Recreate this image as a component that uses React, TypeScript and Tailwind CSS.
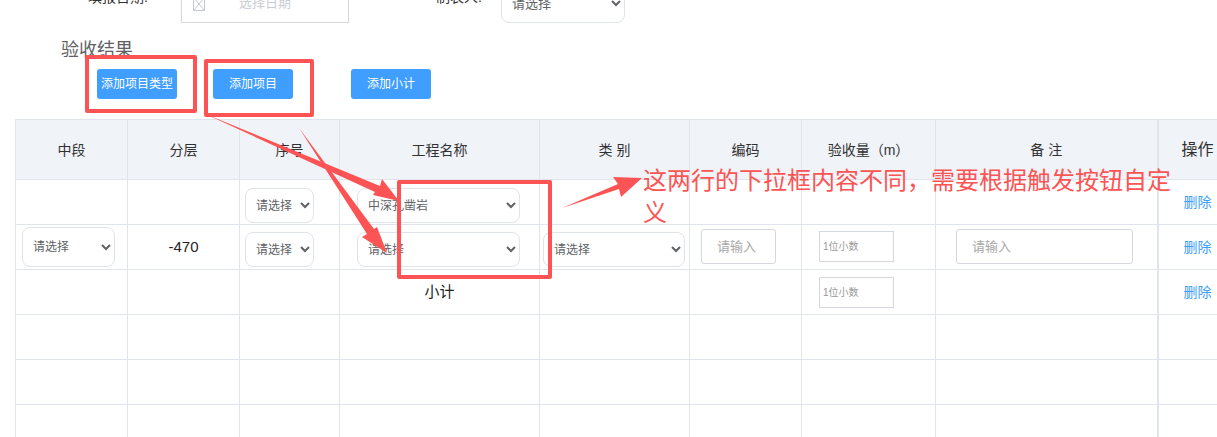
const cols = [112, 112, 100, 200, 150, 112, 134, 222, 80];
const headers = ["中段", "分层", "序号", "工程名称", "类 别", "编码", "验收量（m）", "备 注", "操作"];
const font = "[font-family:'Liberation_Sans','Noto_Sans_CJK_SC',sans-serif]";

function Sel({ label, className }: { label: string; className: string }) {
  return (
    <select
      defaultValue={label}
      className={`border border-[#dfe3ea] rounded-[8px] bg-white pl-[6px] text-[12px] text-[#606266] ${className}`}
    >
      <option>{label}</option>
    </select>
  );
}

function Cell({ children, className = "" }: { children?: React.ReactNode; className?: string }) {
  return <div className={`h-[44px] flex ${className}`}>{children}</div>;
}

function TextInput({ className }: { className: string }) {
  return (
    <div className={`flex items-center pl-[15px] border border-[#d5d8de] rounded-[3px] text-[13px] text-[#a8a8a8] ${className}`}>
      请输入
    </div>
  );
}

function Decimal() {
  return (
    <div className="w-[75px] h-[31px] flex items-center pl-[3px] border border-[#d5d8de] text-[10px] text-[#999]">
      1位小数
    </div>
  );
}

function Del() {
  return (
    <Cell className="items-center pl-[25px]">
      <a className="text-[14px] text-[#409eff]">删除</a>
    </Cell>
  );
}

export default function App() {
  const rows: React.ReactNode[][] = [
    [
      <Cell />,
      <Cell />,
      <Cell className="pt-[8px] pl-[5px]"><Sel label="请选择" className="w-[69px] h-[35px]" /></Cell>,
      <Cell className="pt-[8px] pl-[17px]"><Sel label="中深孔凿岩" className="w-[163px] h-[35px]" /></Cell>,
      <Cell />,
      <Cell />,
      <Cell />,
      <Cell />,
      <Del />,
    ],
    [
      <Cell className="pt-[2px] pl-[6px]"><Sel label="请选择" className="w-[93px] h-[40px]" /></Cell>,
      <Cell className="items-center justify-center pt-[1px] text-[15px] text-[#222]">-470</Cell>,
      <Cell className="pt-[7px] pl-[5px]"><Sel label="请选择" className="w-[69px] h-[35px]" /></Cell>,
      <Cell className="pt-[7px] pl-[17px]"><Sel label="请选择" className="w-[163px] h-[35px]" /></Cell>,
      <Cell className="pt-[7px] pl-[3px]"><Sel label="请选择" className="w-[142px] h-[35px]" /></Cell>,
      <Cell className="pt-[4px] pl-[11px]"><TextInput className="w-[75px] h-[35px]" /></Cell>,
      <Cell className="pt-[6px] pl-[17px]"><Decimal /></Cell>,
      <Cell className="pt-[4px] pl-[20px]"><TextInput className="w-[177px] h-[35px]" /></Cell>,
      <Del />,
    ],
    [
      <Cell />,
      <Cell />,
      <Cell />,
      <Cell className="items-center justify-center text-[15px] text-[#222]">小计</Cell>,
      <Cell />,
      <Cell />,
      <Cell className="pt-[7px] pl-[17px]"><Decimal /></Cell>,
      <Cell />,
      <Del />,
    ],
    Array.from({ length: 9 }, () => <Cell />),
    Array.from({ length: 9 }, () => <Cell />),
    Array.from({ length: 9 }, () => <Cell />),
  ];

  return (
    <div className={`relative w-[1217px] h-[437px] overflow-hidden bg-white ${font}`}>
      {/* form row, cut off by the top of the shot */}
      <div className="h-[23px] overflow-hidden flex items-end text-[14px] text-[#606266]">
        <div className="w-[181px] pl-[88px] mb-[15px] text-[#333] whitespace-nowrap">填报日期:</div>
        <div className="w-[168px] h-[40px] border border-[#d5d8de] flex items-end pb-[10px] pl-[11px] text-[13px] text-[#c8ccd3]">
          <svg width="12" height="14" viewBox="0 0 12 14" className="mb-[1px]" fill="none" stroke="#c4c8ce">
            <path d="M.5.5h11v13H.5zM.5.5l11 13M11.5.5l-11 13" />
          </svg>
          <span className="ml-[34px]">选择日期</span>
        </div>
        <div className="w-[152px] pl-[87px] mb-[15px] text-[#333] whitespace-nowrap">制表人:</div>
        <select defaultValue="请选择" className="w-[124px] h-[40px] border border-[#dfe3ea] rounded-[8px] bg-white pl-[6px] text-[13px] text-[#606266]">
          <option>请选择</option>
        </select>
      </div>

      <div className="h-[46px] pl-[61px] pt-[15px] text-[18px] leading-[24px] text-[#606266]">验收结果</div>

      <div className="h-[50px] flex pl-[97px] gap-[36px] text-[12px] text-white">
        <button className="w-[80px] h-[30px] bg-[#409eff] rounded-[3px] whitespace-nowrap">添加项目类型</button>
        <button className="w-[80px] h-[30px] bg-[#409eff] rounded-[3px]">添加项目</button>
        <button className="w-[80px] h-[30px] ml-[22px] bg-[#409eff] rounded-[3px]">添加小计</button>
      </div>

      <table className="ml-[15px] table-fixed border-collapse w-[1222px]">
        <colgroup>
          {cols.map((w, i) => (
            <col key={i} style={{ width: w }} />
          ))}
        </colgroup>
        <thead>
          <tr className="h-[60px] bg-[#f0f3f8]">
            {headers.map((h, i) => (
              <th
                key={i}
                className={`border border-[#dfe4ed] p-0 pt-[1px] text-center font-normal text-[14px] text-[#303133] ${i === 8 ? "border-l-2 text-[16px] text-left pl-[23px]" : ""}`}
              >
                {h}
              </th>
            ))}
          </tr>
        </thead>
        <tbody>
          {rows.map((row, r) => (
            <tr key={r}>
              {row.map((c, i) => (
                <td key={i} className={`border border-[#dfe4ed] p-0 ${i === 8 ? "border-l-2" : ""}`}>
                  {c}
                </td>
              ))}
            </tr>
          ))}
        </tbody>
      </table>

      {/* red markup drawn on top of the screenshot */}
      <div className="absolute left-[85px] top-[55px] w-[112px] h-[58px] border-[4px] border-[#fc5454] rounded-[2px]" />
      <div className="absolute left-[204px] top-[59px] w-[110px] h-[58px] border-[4px] border-[#fc5454] rounded-[2px]" />
      <div className="absolute left-[397px] top-[180px] w-[155px] h-[99px] border-[4px] border-[#fc5454] rounded-[2px]" />

      <svg className="absolute inset-0" width="1217" height="437" fill="#fc5454">
        <polygon points="203,113 380,186 382,179 399,201 373,195 375,192" />
        <polygon points="299,128 374,229 377,227 387,253 362,237 367,234" />
        <polygon points="562,208 618,184 613,177 642,178 621,197 619,189" />
      </svg>

      <div className="absolute left-[643px] top-[165px] w-[532px] text-[24px] leading-[32px] text-[#fc5454]">
        这两行的下拉框内容不同，需要根据触发按钮自定义
      </div>
    </div>
  );
}
